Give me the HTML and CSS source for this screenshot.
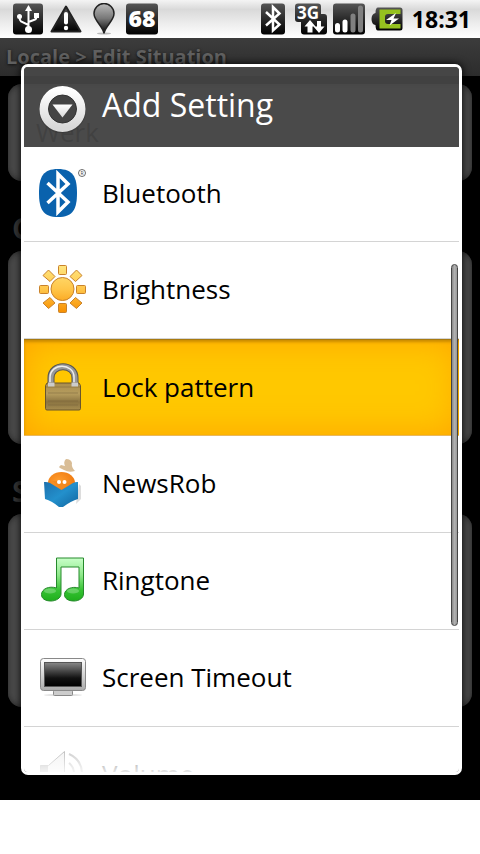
FILE: index.html
```html
<!DOCTYPE html>
<html lang="en">
<head>
    <meta charset="UTF-8">
    <meta name="viewport" content="width=device-width, initial-scale=1.0">
    <title>Locale - Edit Situation</title>
    <link rel="stylesheet" href="styles.css">
</head>
<body>
    <div class="screen">
        <header class="status-bar">
            <!-- USB -->
            <svg class="status-icon" viewBox="0 0 32 32">
                <defs>
                    <linearGradient id="dark" x1="0" y1="0" x2="0" y2="1">
                        <stop offset="0" stop-color="#555"/>
                        <stop offset="0.5" stop-color="#2a2a2a"/>
                        <stop offset="1" stop-color="#000"/>
                    </linearGradient>
                </defs>
                <rect x="1" y="0.5" width="30" height="31" rx="3" fill="url(#dark)"/>
                <g fill="none" stroke="#fff" stroke-width="2">
                    <path d="M16.500 6V27M16.500 22L9 18.500Q7.500 17.500 7.500 14M16.500 19L23 16.500Q24.500 16 24.500 13"/>
                </g>
                <path d="M16.500 2L20 8H13Z" fill="#fff"/>
                <circle cx="7.500" cy="13.500" r="2.500" fill="#fff"/>
                <rect x="22" y="10" width="5" height="5" fill="#fff"/>
                <circle cx="16.500" cy="26.500" r="3.500" fill="#fff"/>
            </svg>
            <!-- Warning -->
            <svg class="status-icon" viewBox="0 0 32 32">
                <path d="M16 3.500L30.500 28.500H1.500Z" fill="url(#dark)" stroke="#222" stroke-width="2" stroke-linejoin="round"/>
                <path d="M16 11V19.500" stroke="#fff" stroke-width="4" stroke-linecap="round"/>
                <circle cx="16" cy="25" r="2.200" fill="#fff"/>
            </svg>
            <!-- Location pin -->
            <svg class="status-icon" viewBox="0 0 32 32">
                <defs>
                    <linearGradient id="pin" x1="0" y1="0" x2="0" y2="1">
                        <stop offset="0" stop-color="#bbb"/>
                        <stop offset="0.5" stop-color="#777"/>
                        <stop offset="1" stop-color="#000"/>
                    </linearGradient>
                </defs>
                <ellipse cx="16" cy="30.500" rx="7" ry="1" fill="#bbb"/>
                <path d="M16 30.500C15 23 6 18 6 10.500A10 10 0 0 1 26 10.500C26 18 17 23 16 30.500Z" fill="url(#pin)" stroke="#222" stroke-width="1.500"/>
            </svg>
            <svg class="status-icon" viewBox="0 0 32 32">
                <rect x="0" y="0.500" width="32" height="31" rx="3" fill="url(#dark)"/>
                <text class="badge-text" x="16" y="24" text-anchor="middle">68</text>
            </svg>
            <div class="status-right">
                <!-- Bluetooth -->
                <svg class="status-icon" viewBox="0 0 32 32">
                    <rect x="4" y="0.500" width="24" height="31" rx="3" fill="url(#dark)"/>
                    <path d="M9 9L22.500 21.500L16 27.500V4L22.500 10.500L9 22.500" fill="none" stroke="#fff" stroke-width="2.500"/>
                </svg>
                <!-- 3G data -->
                <svg class="status-icon" viewBox="0 0 32 32">
                    <path d="M3 .500H23Q26 .500 26 3.500V11H29Q32 11 32 14V28.500Q32 31.500 29 31.500H9Q6 31.500 6 28.500V19H3Q0 19 0 16V3.500Q0 .500 3 .500Z" fill="url(#dark)"/>
                    <text class="network-text" x="13" y="16" text-anchor="middle">3G</text>
                    <path d="M15 17L20.500 23.500H17.500V29.500H12.500V23.500H9.500ZM24 30L18.500 23.500H22V18H26V23.500H29.500Z" fill="#fff"/>
                </svg>
                <!-- Signal -->
                <svg class="status-icon" viewBox="0 0 32 32">
                    <rect x="0" y="0.500" width="32" height="31" rx="3" fill="url(#dark)"/>
                    <g stroke-width="5" stroke-linecap="round">
                        <path d="M4.500 22.500V27M12 19V27" stroke="#fff"/>
                        <path d="M20 13V27M27.500 5V27" stroke="#808080"/>
                    </g>
                </svg>
                <!-- Battery -->
                <svg class="status-icon" viewBox="0 0 32 32">
                    <path d="M7 4.500H29Q31.500 4.500 31.500 7V25Q31.500 27.500 29 27.500H7Q4.500 27.500 4.500 22Q.500 21.500 .500 16Q.500 11 4.500 10Q4.500 4.500 7 4.500Z" fill="url(#dark)"/>
                    <path d="M8.500 6.500H29.500V11H17Q14 11 14 14V18Q14 21 17 21H29.500V25.500H8.500Z" fill="#95c11f"/>
                    <path d="M25 10L15 17H20.500L18.500 22.500L28 15.500H22.500Z" fill="#fff"/>
                </svg>
                <span class="clock">18:31</span>
            </div>
        </header>

        <h1 class="title-bar">Locale &gt; Edit Situation</h1>

        <main class="situation">
            <div class="card card-name">
                <input class="name-input" type="text" value="Werk" aria-label="Name">
            </div>
            <h2 class="section-title">Conditions</h2>
            <div class="card"></div>
            <h2 class="section-title">Settings</h2>
            <div class="card"></div>
        </main>

        <div class="dialog" role="dialog" aria-labelledby="dialog-title">
            <div class="dialog-header">
                <svg class="icon" viewBox="0 0 48 48">
                    <defs>
                        <linearGradient id="ring" x1="0" y1="0" x2="0" y2="1">
                            <stop offset="0" stop-color="#fff"/>
                            <stop offset="1" stop-color="#d8d8d8"/>
                        </linearGradient>
                    </defs>
                    <circle cx="24.500" cy="25" r="23.500" fill="#333" opacity=".5"/>
                    <circle cx="24.500" cy="24" r="18.500" fill="#444" stroke="url(#ring)" stroke-width="9"/>
                    <circle cx="24.500" cy="24" r="14" fill="none" stroke="#333"/>
                    <path d="M14.500 19.500H34.500L24.500 32.500Z" fill="url(#ring)"/>
                </svg>
                <h2 class="dialog-title" id="dialog-title">Add Setting</h2>
            </div>
            <ul class="setting-list">
                <li>
                    <button class="setting">
                        <svg class="icon" viewBox="0 0 48 48">
                            <path d="M20 0C35 0 39 8 39 24S35 48 20 48S1 40 1 24S5 0 20 0Z" fill="#0a62ad"/>
                            <path d="M9.500 14L30 33L20 43V5L30 15L9.500 34" fill="none" stroke="#fff" stroke-width="3.500"/>
                            <circle cx="44" cy="4" r="3.500" fill="none" stroke="#444" stroke-width=".8"/>
                            <text class="registered" x="44" y="6" text-anchor="middle">R</text>
                        </svg>
                        Bluetooth
                    </button>
                </li>
                <li>
                    <button class="setting">
                        <svg class="icon" viewBox="0 0 48 48">
                            <defs>
                                <linearGradient id="sun" x1="0" y1="0" x2="0" y2="48" gradientUnits="userSpaceOnUse">
                                    <stop offset="0" stop-color="#ffe680"/>
                                    <stop offset="0.5" stop-color="#ffc64a"/>
                                    <stop offset="1" stop-color="#f78f00"/>
                                </linearGradient>
                            </defs>
                            <g fill="url(#sun)" stroke="#c9822b">
                                <circle cx="24.500" cy="24" r="11.500"/>
                                <rect x="20.500" y="0.500" width="8" height="9" rx="1"/>
                                <rect x="20.500" y="38.500" width="8" height="9" rx="1"/>
                                <rect x="1.500" y="20.500" width="9" height="8" rx="1"/>
                                <rect x="38.500" y="20.500" width="9" height="8" rx="1"/>
                                <path d="M10.500 5L17 11.500L12 16.500L5 10.500ZM38.500 5L44 10.500L37.500 16.500L32 11.500ZM10.500 43.500L17 38L12 32.500L5 38ZM38.500 43.500L44 38L37.500 32.500L32 38Z" stroke-linejoin="round"/>
                            </g>
                        </svg>
                        Brightness
                    </button>
                </li>
                <li>
                    <button class="setting selected">
                        <svg class="icon" viewBox="0 0 48 48">
                            <defs>
                                <linearGradient id="brass" x1="0" y1="0" x2="0" y2="1">
                                    <stop offset="0" stop-color="#a98d4e"/>
                                    <stop offset="0.4" stop-color="#b59c5e"/>
                                    <stop offset="0.7" stop-color="#8b7441"/>
                                    <stop offset="1" stop-color="#a58c50"/>
                                </linearGradient>
                            </defs>
                            <path d="M13 23V15C13 0 37 0 37 15V23" fill="none" stroke="#555" stroke-width="7"/>
                            <path d="M13 23V15C13 0 37 0 37 15V23" fill="none" stroke="#999" stroke-width="5"/>
                            <path d="M12 23V15C12 -1 36 0 36 14V23" fill="none" stroke="#eee" stroke-width="1.500"/>
                            <path d="M9 20H41L42.500 22.500V45.500Q42.500 47 41 47H9Q7.500 47 7.500 45.500V22.500Z" fill="url(#brass)" stroke="#69552c"/>
                            <path d="M8 24H42M10 30H40M10 38H40M10 42H40" stroke="#77623a" stroke-width=".5"/>
                            <path d="M10 19.500V23.500H16.500V19.500M33.500 19.500V23.500H40V19.500" fill="#ccc"/>
                        </svg>
                        Lock pattern
                    </button>
                </li>
                <li>
                    <button class="setting">
                        <svg class="icon" viewBox="0 0 48 48">
                            <defs>
                                <linearGradient id="book" x1="0" y1="0" x2="1" y2="1">
                                    <stop offset="0" stop-color="#1d70ad"/>
                                    <stop offset="0.5" stop-color="#2390cc"/>
                                    <stop offset="1" stop-color="#12659f"/>
                                </linearGradient>
                                <radialGradient id="head" cx="0.4" cy="0.4" r="0.6">
                                    <stop offset="0" stop-color="#ff9d2e"/>
                                    <stop offset="1" stop-color="#ef7a10"/>
                                </radialGradient>
                            </defs>
                            <path d="M41 25L43 27V40L38 45Z" fill="#ddd"/>
                            <path d="M22 9Q20 8 23 6L27 7Q25 3 28 0Q33 0 34 4Q33 8 37 12Q31 14 26 11Z" fill="#d9bd96"/>
                            <ellipse cx="23.500" cy="24" rx="13.500" ry="11" fill="url(#head)"/>
                            <path d="M6 23Q9 22.500 12 24L23.500 31L35 24Q38 22.500 40 23V40Q33 42 25 48H21Q14 42 7 40Z" fill="url(#book)"/>
                            <path d="M14 22H33L23.500 30Z" fill="#f58a1c"/>
                            <circle cx="21" cy="23" r="2" fill="#fff"/>
                            <circle cx="26.500" cy="23" r="2" fill="#fff"/>
                        </svg>
                        NewsRob
                    </button>
                </li>
                <li>
                    <button class="setting">
                        <svg class="icon" viewBox="0 0 48 48">
                            <defs>
                                <linearGradient id="note" x1="0" y1="0" x2="0" y2="1">
                                    <stop offset="0" stop-color="#c9ffc9"/>
                                    <stop offset="0.4" stop-color="#8ee88a"/>
                                    <stop offset="0.75" stop-color="#35c232"/>
                                    <stop offset="1" stop-color="#1fae1c"/>
                                </linearGradient>
                            </defs>
                            <path d="M18.500 2H45.500V38C45.500 42 41 45 36 45C30 45 26.500 42.500 26.500 38.500C26.500 33 34 30 41 32V11H23V38C23 42 18 45 13 45C7 45 3.500 42.500 3.500 38.500C3.500 33 11 29.500 18.500 32Z" fill="url(#note)" stroke="#268a2c" stroke-linejoin="round"/>
                            <ellipse cx="12" cy="35" rx="6" ry="2.500" fill="#fff" opacity=".25"/>
                            <ellipse cx="35" cy="35" rx="6" ry="2.500" fill="#fff" opacity=".25"/>
                        </svg>
                        Ringtone
                    </button>
                </li>
                <li>
                    <button class="setting">
                        <svg class="icon" viewBox="0 0 48 48">
                            <defs>
                                <linearGradient id="frame" x1="0" y1="0" x2="0" y2="1">
                                    <stop offset="0" stop-color="#fff"/>
                                    <stop offset="1" stop-color="#aaa"/>
                                </linearGradient>
                                <linearGradient id="display" x1="0" y1="0" x2="0" y2="1">
                                    <stop offset="0" stop-color="#888"/>
                                    <stop offset="0.65" stop-color="#111"/>
                                    <stop offset="1" stop-color="#000"/>
                                </linearGradient>
                            </defs>
                            <ellipse cx="25" cy="42" rx="19" ry="1" fill="#ddd"/>
                            <rect x="15.500" y="37.500" width="19" height="5" rx="1" fill="#ccc" stroke="#888"/>
                            <rect x="2.500" y="5.500" width="45" height="32" rx="3" fill="url(#frame)" stroke="#888"/>
                            <rect x="6.500" y="9.500" width="37" height="24" fill="url(#display)" stroke="#555"/>
                        </svg>
                        Screen Timeout
                    </button>
                </li>
                <li>
                    <button class="setting">
                        <svg class="icon" viewBox="0 0 48 48">
                            <path d="M2.500 15.500H10.500L26.500 1.500V46.500L10.500 32.500H2.500Z" fill="#e8e8e8" stroke="#777" stroke-linejoin="round"/>
                            <path d="M2.500 15.500H10V32.500H2.500Z" fill="#888"/>
                            <path d="M31 13Q36 17 36 24T31 35M31 4Q44 10 44 24T31 44" fill="none" stroke="#999" stroke-width="2"/>
                        </svg>
                        Volume
                    </button>
                </li>
            </ul>
            <div class="scroll-thumb"></div>
        </div>
    </div>
</body>
</html>
```
FILE: styles.css
```css
* {
    box-sizing: border-box;
}

body {
    margin: 0;
    background-color: #fff;
    font-family: "Open Sans", "Noto Sans", sans-serif;
}

h1, h2, ul {
    margin: 0;
    padding: 0;
}

.screen {
    position: relative;
    background-color: #000;
}

/* Status bar */
.status-bar {
    display: flex;
    align-items: center;
    gap: 6px;
    height: 38px;
    padding: 0 9px 0 12px;
    background: linear-gradient(#f4f4f4, #d9d9d9 25%, #ececec 60%, #fff);
}

.status-icon {
    width: 32px;
    height: 32px;
    flex: none;
}

.status-right {
    display: flex;
    align-items: center;
    gap: 6px;
    margin-left: auto;
}

.badge-text {
    font-size: 23px;
    font-weight: 800;
    fill: #fff;
}

.network-text {
    font-size: 17px;
    font-weight: 700;
    fill: #fff;
}

.clock {
    margin-left: 3px;
    font-size: 23px;
    font-weight: 700;
    color: #000;
}

/* Dimmed activity behind the dialog */
.title-bar {
    height: 38px;
    padding: 0 6px;
    background: linear-gradient(#3c3c3c, #2c2c2c);
    color: #606060;
    font-size: 20px;
    line-height: 38px;
    text-shadow: 0 1px 3px #111;
}

.situation {
    padding: 8px 8px 93px;
}

.card {
    min-height: 193px;
    border-radius: 14px;
    background-color: #4d4d4d;
    box-shadow: inset 0 0 6px #222;
}

.card-name {
    min-height: 97px;
    padding: 24px 28px;
}

.name-input {
    width: 100%;
    padding: 0;
    border: none;
    background: none;
    color: #000;
    font-family: inherit;
    font-size: 26px;
    line-height: 48px;
}

.section-title {
    padding: 24px 4px 0;
    color: #333;
    font-size: 29px;
    line-height: 46px;
}

/* Dialog */
.dialog {
    position: absolute;
    top: 64px;
    right: 18px;
    bottom: 25px;
    left: 21px;
    display: flex;
    flex-direction: column;
    border: 3px solid #fff;
    border-radius: 7px;
    overflow: hidden;
    box-shadow: 0 0 8px #000;
}

.dialog-header {
    display: flex;
    align-items: center;
    gap: 16px;
    height: 80px;
    padding: 4px 14px 0;
    flex: none;
    background-color: rgba(74, 74, 74, 0.88);
}

.dialog-title {
    padding-bottom: 8px;
    color: #fff;
    font-size: 32px;
    font-weight: 400;
    line-height: 40px;
}

.icon {
    width: 48px;
    height: 48px;
    flex: none;
}

.setting-list {
    flex: 1;
    min-height: 0;
    overflow: hidden;
    background-color: #fff;
    list-style: none;
}

/* the list fades out where it runs under the bottom edge */
.dialog::after {
    content: "";
    position: absolute;
    right: 0;
    bottom: 0;
    left: 0;
    height: 40px;
    background: linear-gradient(rgba(255, 255, 255, 0.2), rgba(255, 255, 255, 0.9));
}

.setting {
    display: flex;
    align-items: center;
    gap: 16px;
    width: 100%;
    height: 97px;
    padding: 0 14px 2px;
    border: none;
    border-bottom: 1px solid #d4d4d4;
    background: none;
    color: #000;
    font-family: inherit;
    font-size: 26px;
    text-align: left;
}

.setting-list li:first-child .setting {
    height: 95px;
}

.setting.selected {
    border-top: 1px solid #a87a10;
    border-bottom-color: #e8b860;
    background-color: #ffc800;
    box-shadow: inset 0 2px 3px #c98a00, inset 0 0 36px #ffa200;
}

.registered {
    font-size: 5px;
    fill: #444;
}

.scroll-thumb {
    position: absolute;
    top: 197px;
    right: 1px;
    width: 7px;
    height: 362px;
    border: 1px solid #444;
    border-radius: 4px;
    background: linear-gradient(to right, #888, #b0b0b0 50%, #999);
}
```
